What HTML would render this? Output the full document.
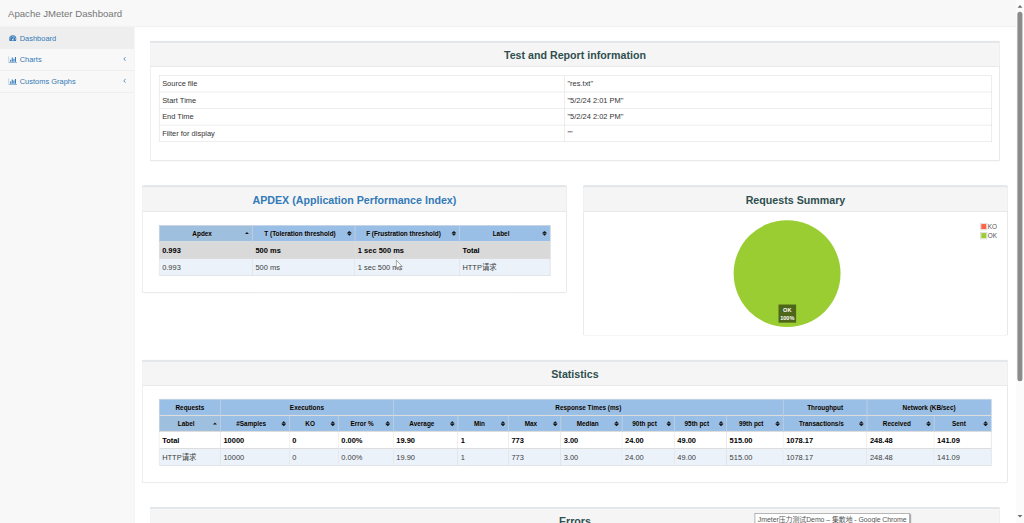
<!DOCTYPE html>
<html lang="en">
<head>
<meta charset="utf-8">
<title>Apache JMeter Dashboard</title>
<style>
*{box-sizing:border-box}
html,body{margin:0;padding:0;width:1024px;height:523px;overflow:hidden;background:#fff}
#stage{position:absolute;left:0;top:0;width:1920px;height:981px;overflow:hidden;transform:scale(0.5333333);transform-origin:0 0;
 font-family:"Liberation Sans","Noto Sans CJK SC",sans-serif;font-size:14px;line-height:20px;color:#333;background:#f8f8f8}
a{color:#337ab7;text-decoration:none}
p{margin:0}
.navbar{position:absolute;left:0;top:0;width:1905px;height:51px;background:#f8f8f8;border-bottom:1px solid #e7e7e7}
.navbar-brand{position:absolute;left:0;top:0;padding:15px 15px;font-size:18px;line-height:20px;color:#777}
.sidebar{position:absolute;left:0;top:51px;width:251px}
.sidebar ul{list-style:none;margin:0;padding:0}
.sidebar li{border-bottom:1px solid #e7e7e7;position:relative;height:41px}
.sidebar li a{display:block;padding:10px 15px;height:40px;line-height:20px}
.sidebar li a.active{background:#eee}
.sidebar .arrow{position:absolute;right:15px;top:11px}
.sidebar .fw{display:inline-block;width:18px;text-align:center;height:14px;vertical-align:-3px}.sidebar .fw svg{display:inline-block;vertical-align:top}
#page-wrapper{position:absolute;left:251px;top:51px;width:1654px;height:940px;background:#fff;border-left:1px solid #e7e7e7}
.panel{position:absolute;background:#fff;border:1px solid #d6d6d6;border-top:5px solid #e3e7ea;border-radius:4px;box-shadow:0 1px 1px rgba(0,0,0,.05)}
.panel-heading{background:#f5f5f5;border-bottom:1px solid #ddd;padding:9px 15px 5px;text-align:center;height:44px}
#p2 .panel-heading,#p3 .panel-heading{padding-top:10px;height:45px}
.dashboard-title{font-size:20px;font-weight:bold;color:#2f4f4f;line-height:28.570px}
table{border-collapse:separate;border-spacing:0;table-layout:fixed}
#generalInfos{position:absolute;border:1px solid #ddd;border-width:1px 0 0 1px}
#generalInfos td{border:1px solid #ddd;border-width:0 1px 1px 0;padding:5px;line-height:20px;height:31px}
.ts{position:absolute;border:#cdcdcd 1px solid;border-width:1px 0 0 1px;font-size:14px;text-align:left;background:#fff}
.ts th,.ts td{border:#d6d6d6 1px solid;border-width:0 1px 1px 0;overflow:hidden;white-space:nowrap}
.ts th{font:bold 12px/18px "Liberation Sans",sans-serif;color:#000;background:#99bfe6;text-align:center;position:relative;padding:5px 18px 5px 4px;vertical-align:middle;border-bottom:2px solid #ddd;text-shadow:0 1px 0 rgba(204,204,204,.7)}
.ts tr.h2 th{padding-top:6.5px;padding-bottom:3.5px}
.ts th.g{padding:5px 4px 5px 4px}
.ts th.asc{background:#9fbfdf}
.ts td{color:#3d3d3d;background:#fff;vertical-align:top;line-height:20px;padding:5.500px 5px 4px 5px}
.ts tr.odd td{background:#ebf2fa}
.ts tr.tot td{font-weight:bold;color:#000;border-bottom:2px solid #ddd}
.ts tr.hov td{background:#d9d9d9}
.ts th svg.so{position:absolute;right:5.500px;top:50%;margin-top:-5.500px}
.ts th.asc svg.so{margin-top:-3.500px;right:5px}
</style>
</head>
<body>
<div id="stage">
<div class="navbar"><a class="navbar-brand">Apache JMeter Dashboard</a></div>
<div class="sidebar"><ul>
<li><a class="active"><span class="fw"><svg width="14" height="14" viewBox="0 0 1792 1792"><path fill="#337ab7" d="M384 1152q0-53-37.500-90.500t-90.500-37.500-90.500 37.500-37.500 90.500 37.500 90.500 90.500 37.500 90.500-37.500 37.500-90.500zM576 704q0-53-37.500-90.500t-90.500-37.500-90.500 37.500-37.500 90.500 37.500 90.500 90.500 37.500 90.500-37.500 37.500-90.500zM1004 1185l101-382q6-26-7.500-48.500t-38.500-29.500-48 6.500-30 39.500l-101 382q-60 5-107 43.500t-63 98.500q-20 77 20 146t117 89 146-20 89-117q16-60-6-117t-72-91zM1664 1152q0-53-37.500-90.500t-90.500-37.500-90.500 37.500-37.500 90.500 37.500 90.500 90.500 37.500 90.500-37.500 37.500-90.500zM1024 512q0-53-37.500-90.500t-90.500-37.500-90.500 37.500-37.500 90.500 37.500 90.500 90.500 37.500 90.500-37.500 37.500-90.500zM1472 704q0-53-37.500-90.500t-90.500-37.500-90.500 37.500-37.500 90.500 37.500 90.500 90.500 37.500 90.500-37.500 37.500-90.500zM1792 1152q0 261-141 483-19 29-54 29h-1402q-35 0-54-29-141-221-141-483 0-182 71-348t191-286 286-191 348-71 348 71 286 191 191 286 71 348z"/></svg></span> Dashboard</a></li>
<li><a><span class="fw"><svg width="16" height="14" viewBox="0 0 2048 1792"><path fill="#337ab7" d="M640 896v512H384V896h256zM1024 384v1024H768V384h256zM2048 1536v128H0V128h128v1408h1920zM1408 640v768h-256V640h256zM1792 256v1152h-256V256h256z"/></svg></span> Charts</a><svg class="arrow" width="5" height="14" viewBox="0 0 640 1792"><path fill="#337ab7" d="M627 544q0 13-10 23l-393 393 393 393q10 10 10 23t-10 23l-50 50q-10 10-23 10t-23-10l-466-466q-10-10-10-23t10-23l466-466q10-10 23-10t23 10l50 50q10 10 10 23z"/></svg></li>
<li><a><span class="fw"><svg width="16" height="14" viewBox="0 0 2048 1792"><path fill="#337ab7" d="M640 896v512H384V896h256zM1024 384v1024H768V384h256zM2048 1536v128H0V128h128v1408h1920zM1408 640v768h-256V640h256zM1792 256v1152h-256V256h256z"/></svg></span> Customs Graphs</a><svg class="arrow" width="5" height="14" viewBox="0 0 640 1792"><path fill="#337ab7" d="M627 544q0 13-10 23l-393 393 393 393q10 10 10 23t-10 23l-50 50q-10 10-23 10t-23-10l-466-466q-10-10-10-23t10-23l466-466q10-10 23-10t23 10l50 50q10 10 10 23z"/></svg></li>
</ul></div>
<div id="page-wrapper">
<div class="panel" id="p1" style="left:29.0px;top:25.0px;width:1594.0px;height:226.0px"><div class="panel-heading"><p class="dashboard-title">Test and Report information</p></div><table id="generalInfos" style="left:16px;top:60px;width:1562px"><colgroup><col style="width:760px"><col></colgroup>
<tr><td>Source file</td><td>"res.txt"</td></tr>
<tr><td>Start Time</td><td>"5/2/24 2:01 PM"</td></tr>
<tr><td>End Time</td><td>"5/2/24 2:02 PM"</td></tr>
<tr><td>Filter for display</td><td>""</td></tr>
</table></div>
<div class="panel" id="p2" style="left:14.0px;top:296.0px;width:797.0px;height:202.0px"><div class="panel-heading"><p class="dashboard-title"><a>APDEX (Application Performance Index)</a></p></div><table class="ts" id="apdex" style="left:31.0px;top:70.0px;width:734.0px"><colgroup><col style="width:175.0px"><col style="width:192.0px"><col style="width:196.0px"><col style="width:170.0px"></colgroup><thead><tr class="h2" style="height:31px"><th class="asc"><span>Apdex</span><svg class="so" width="10" height="6" viewBox="-1 -1 10 6"><path d="M0.300 3.800L3.500 0.500h1L7.700 3.800z" fill="#1a1a1a"/></svg></th><th><span>T (Toleration threshold)</span><svg class="so" width="10" height="11" viewBox="-1 -1 10 11"><path d="M0 4L3.400 0.400h1.200L8 4zM0 5L3.400 8.600h1.200L8 5z" fill="#1a1a1a" stroke="#1a1a1a" stroke-width="0.300" stroke-linejoin="round"/></svg></th><th><span>F (Frustration threshold)</span><svg class="so" width="10" height="11" viewBox="-1 -1 10 11"><path d="M0 4L3.400 0.400h1.200L8 4zM0 5L3.400 8.600h1.200L8 5z" fill="#1a1a1a" stroke="#1a1a1a" stroke-width="0.300" stroke-linejoin="round"/></svg></th><th><span>Label</span><svg class="so" width="10" height="11" viewBox="-1 -1 10 11"><path d="M0 4L3.400 0.400h1.200L8 4zM0 5L3.400 8.600h1.200L8 5z" fill="#1a1a1a" stroke="#1a1a1a" stroke-width="0.300" stroke-linejoin="round"/></svg></th></tr></thead><tbody><tr class="tot hov" style="height:32px"><td style="padding-top:6px">0.993</td><td style="padding-top:6px">500 ms</td><td style="padding-top:6px">1 sec 500 ms</td><td style="padding-top:6px">Total</td></tr><tr class="odd" style="height:31px"><td>0.993</td><td>500 ms</td><td>1 sec 500 ms</td><td>HTTP请求</td></tr></tbody></table></div>
<div class="panel" id="p3" style="left:841.0px;top:296.0px;width:797.0px;height:282.0px"><div class="panel-heading"><p class="dashboard-title">Requests Summary</p></div><svg width="794" height="276" style="position:absolute;left:0;top:0" viewBox="0 0 794 276"><circle cx="381.8" cy="161.0" r="100.200" fill="#9acd32"/><rect x="365.7" y="219.0" width="33" height="34" fill="#000" opacity="0.5"/><text x="382.2" y="232.5" font-size="10.500" font-weight="bold" fill="#fff" text-anchor="middle" font-family="Liberation Sans, sans-serif">OK</text><text x="382.2" y="247.5" font-size="10.500" font-weight="bold" fill="#fff" text-anchor="middle" font-family="Liberation Sans, sans-serif">100%</text><rect x="744.6" y="66.6" width="12" height="12.500" fill="#fff" stroke="#ccc" stroke-width="1"/><rect x="745.8" y="68.1" width="9.500" height="9.500" fill="#ff6347"/><text x="758.0" y="77.2" font-size="12" fill="#545454" font-family="Liberation Sans, sans-serif">KO</text><rect x="744.6" y="83.6" width="12" height="12.500" fill="#fff" stroke="#ccc" stroke-width="1"/><rect x="745.8" y="85.1" width="9.500" height="9.500" fill="#9acd32"/><text x="758.0" y="94.2" font-size="12" fill="#545454" font-family="Liberation Sans, sans-serif">OK</text></svg></div>
<div class="panel" id="p4" style="left:14.0px;top:623.0px;width:1624.0px;height:231.0px"><div class="panel-heading"><p class="dashboard-title">Statistics</p></div><table class="ts" id="stats" style="left:31.0px;top:69.0px;width:1561.0px"><colgroup><col style="width:115.0px"><col style="width:129.0px"><col style="width:92.0px"><col style="width:103.0px"><col style="width:121.0px"><col style="width:95.0px"><col style="width:98.0px"><col style="width:115.0px"><col style="width:98.0px"><col style="width:98.0px"><col style="width:106.0px"><col style="width:157.0px"><col style="width:126.0px"><col style="width:107.0px"></colgroup><thead><tr style="height:31px"><th class="g">Requests</th><th class="g" colspan="3">Executions</th><th class="g" colspan="7">Response Times (ms)</th><th class="g">Throughput</th><th class="g" colspan="2">Network (KB/sec)</th></tr><tr style="height:30px"><th class="asc"><span>Label</span><svg class="so" width="10" height="6" viewBox="-1 -1 10 6"><path d="M0.300 3.800L3.500 0.500h1L7.700 3.800z" fill="#1a1a1a"/></svg></th><th><span>#Samples</span><svg class="so" width="10" height="11" viewBox="-1 -1 10 11"><path d="M0 4L3.400 0.400h1.200L8 4zM0 5L3.400 8.600h1.200L8 5z" fill="#1a1a1a" stroke="#1a1a1a" stroke-width="0.300" stroke-linejoin="round"/></svg></th><th><span>KO</span><svg class="so" width="10" height="11" viewBox="-1 -1 10 11"><path d="M0 4L3.400 0.400h1.200L8 4zM0 5L3.400 8.600h1.200L8 5z" fill="#1a1a1a" stroke="#1a1a1a" stroke-width="0.300" stroke-linejoin="round"/></svg></th><th><span>Error %</span><svg class="so" width="10" height="11" viewBox="-1 -1 10 11"><path d="M0 4L3.400 0.400h1.200L8 4zM0 5L3.400 8.600h1.200L8 5z" fill="#1a1a1a" stroke="#1a1a1a" stroke-width="0.300" stroke-linejoin="round"/></svg></th><th><span>Average</span><svg class="so" width="10" height="11" viewBox="-1 -1 10 11"><path d="M0 4L3.400 0.400h1.200L8 4zM0 5L3.400 8.600h1.200L8 5z" fill="#1a1a1a" stroke="#1a1a1a" stroke-width="0.300" stroke-linejoin="round"/></svg></th><th><span>Min</span><svg class="so" width="10" height="11" viewBox="-1 -1 10 11"><path d="M0 4L3.400 0.400h1.200L8 4zM0 5L3.400 8.600h1.200L8 5z" fill="#1a1a1a" stroke="#1a1a1a" stroke-width="0.300" stroke-linejoin="round"/></svg></th><th><span>Max</span><svg class="so" width="10" height="11" viewBox="-1 -1 10 11"><path d="M0 4L3.400 0.400h1.200L8 4zM0 5L3.400 8.600h1.200L8 5z" fill="#1a1a1a" stroke="#1a1a1a" stroke-width="0.300" stroke-linejoin="round"/></svg></th><th><span>Median</span><svg class="so" width="10" height="11" viewBox="-1 -1 10 11"><path d="M0 4L3.400 0.400h1.200L8 4zM0 5L3.400 8.600h1.200L8 5z" fill="#1a1a1a" stroke="#1a1a1a" stroke-width="0.300" stroke-linejoin="round"/></svg></th><th><span>90th pct</span><svg class="so" width="10" height="11" viewBox="-1 -1 10 11"><path d="M0 4L3.400 0.400h1.200L8 4zM0 5L3.400 8.600h1.200L8 5z" fill="#1a1a1a" stroke="#1a1a1a" stroke-width="0.300" stroke-linejoin="round"/></svg></th><th><span>95th pct</span><svg class="so" width="10" height="11" viewBox="-1 -1 10 11"><path d="M0 4L3.400 0.400h1.200L8 4zM0 5L3.400 8.600h1.200L8 5z" fill="#1a1a1a" stroke="#1a1a1a" stroke-width="0.300" stroke-linejoin="round"/></svg></th><th><span>99th pct</span><svg class="so" width="10" height="11" viewBox="-1 -1 10 11"><path d="M0 4L3.400 0.400h1.200L8 4zM0 5L3.400 8.600h1.200L8 5z" fill="#1a1a1a" stroke="#1a1a1a" stroke-width="0.300" stroke-linejoin="round"/></svg></th><th><span>Transactions/s</span><svg class="so" width="10" height="11" viewBox="-1 -1 10 11"><path d="M0 4L3.400 0.400h1.200L8 4zM0 5L3.400 8.600h1.200L8 5z" fill="#1a1a1a" stroke="#1a1a1a" stroke-width="0.300" stroke-linejoin="round"/></svg></th><th><span>Received</span><svg class="so" width="10" height="11" viewBox="-1 -1 10 11"><path d="M0 4L3.400 0.400h1.200L8 4zM0 5L3.400 8.600h1.200L8 5z" fill="#1a1a1a" stroke="#1a1a1a" stroke-width="0.300" stroke-linejoin="round"/></svg></th><th><span>Sent</span><svg class="so" width="10" height="11" viewBox="-1 -1 10 11"><path d="M0 4L3.400 0.400h1.200L8 4zM0 5L3.400 8.600h1.200L8 5z" fill="#1a1a1a" stroke="#1a1a1a" stroke-width="0.300" stroke-linejoin="round"/></svg></th></tr></thead><tbody><tr class="tot" style="height:32px"><td style="padding-top:6px">Total</td><td style="padding-top:6px">10000</td><td style="padding-top:6px">0</td><td style="padding-top:6px">0.00%</td><td style="padding-top:6px">19.90</td><td style="padding-top:6px">1</td><td style="padding-top:6px">773</td><td style="padding-top:6px">3.00</td><td style="padding-top:6px">24.00</td><td style="padding-top:6px">49.00</td><td style="padding-top:6px">515.00</td><td style="padding-top:6px">1078.17</td><td style="padding-top:6px">248.48</td><td style="padding-top:6px">141.09</td></tr><tr class="odd" style="height:31px"><td>HTTP请求</td><td>10000</td><td>0</td><td>0.00%</td><td>19.90</td><td>1</td><td>773</td><td>3.00</td><td>24.00</td><td>49.00</td><td>515.00</td><td>1078.17</td><td>248.48</td><td>141.09</td></tr></tbody></table></div>
<div class="panel" id="p5" style="left:29.0px;top:899.0px;width:1594.0px;height:150.0px"><div class="panel-heading"><p class="dashboard-title">Errors</p></div></div>

</div>
<div id="sb" style="position:absolute;left:1905px;top:0;width:15px;height:981px;background:#fbfbfb">
<svg width="15" height="981" viewBox="0 0 15 981"><path d="M3 14.500L7.500 9.500l4.500 5z" fill="#6b6b6b"/><rect x="2.600" y="22" width="9.400" height="693" rx="4.700" fill="#8b8b8b"/><path d="M3 965.500L7.500 970.500l4.500-5z" fill="#6b6b6b"/></svg>
</div>
<svg id="cur" style="position:absolute;left:742px;top:486.500px" width="14" height="21" viewBox="-1 -1 14 21"><path d="M0 0V16L3.700 12.500 6.400 18.700 8.600 17.700 6 11.700H11.200z" fill="#fff" stroke="#555" stroke-width="1"/></svg>
<div id="tip" style="position:absolute;left:1415px;top:962px;width:291px;height:30px;background:#fff;border:1px solid #767676;box-shadow:2px 2px 2px rgba(0,0,0,.35);font-size:13px;letter-spacing:-0.12px;line-height:21px;padding:0 5px;color:#575757;white-space:nowrap;overflow:hidden">Jmeter压力测试Demo – 集散地 - Google Chrome</div>
</div>
</body>
</html>
